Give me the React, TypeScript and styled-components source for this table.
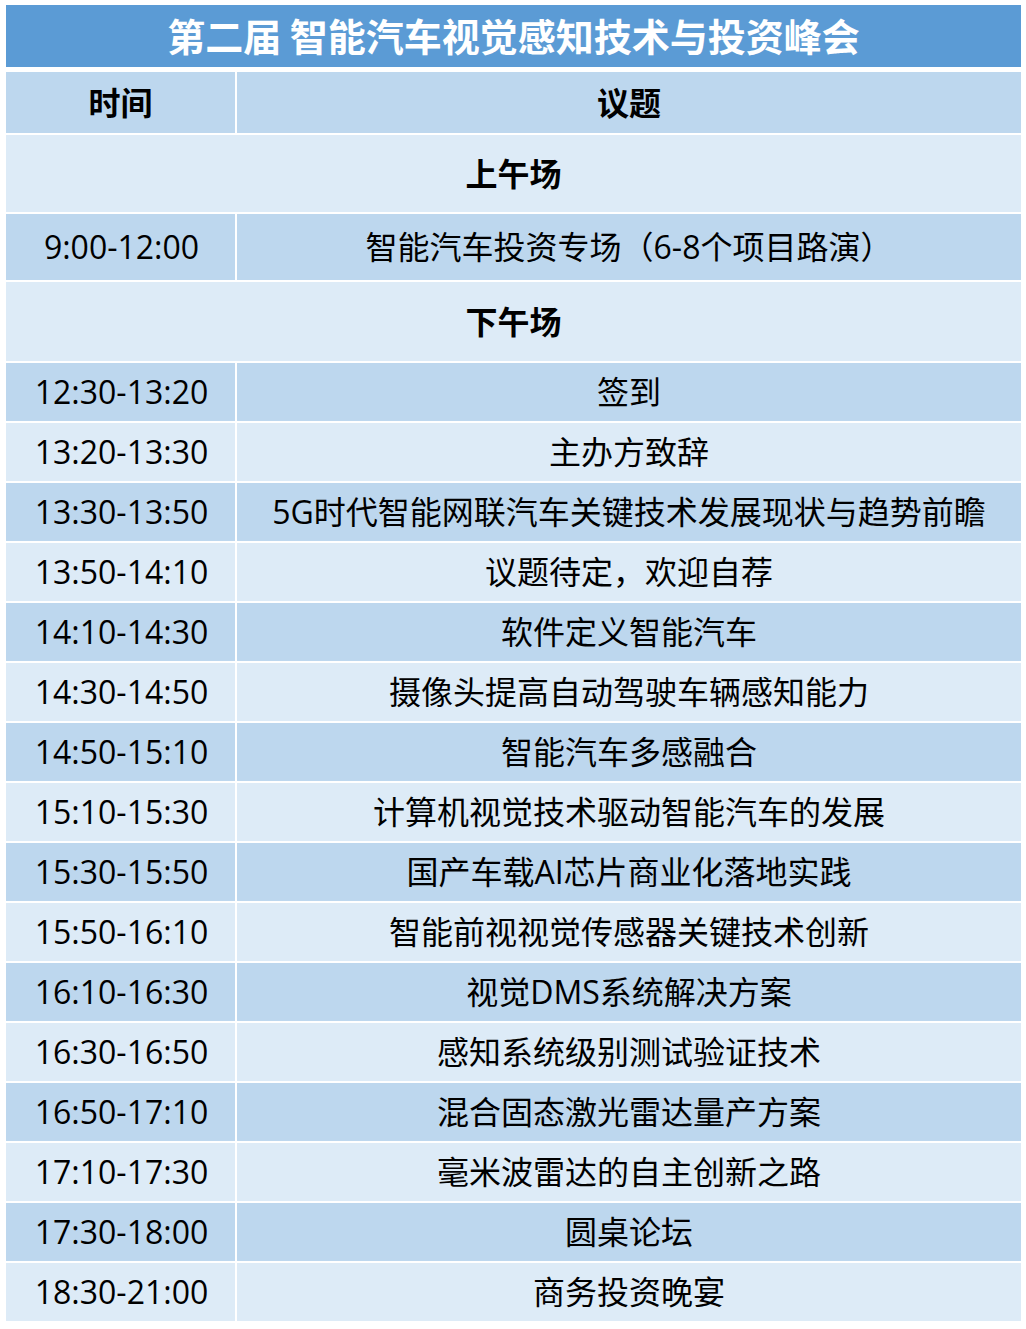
import React from "react";
import styled, { createGlobalStyle } from "styled-components";

const GlobalStyle = createGlobalStyle`
  html, body {
    margin: 0;
    padding: 0;
    background: #ffffff;
  }
  body {
    font-family: "Open Sans", "Noto Sans CJK SC", sans-serif;
    color: #000000;
  }
`;

const Page = styled.div`
  padding: 5px 5px 6px 6px;
  width: 1026px;
  box-sizing: border-box;
`;

const Sheet = styled.div`
  display: grid;
  grid-template-columns: 229px 784px;
  column-gap: 2px;
  row-gap: 2px;
  background: #ffffff;
`;

const Title = styled.div`
  grid-column: 1 / -1;
  height: 62px;
  margin-bottom: 3px;
  background: #5b9bd5;
  color: #ffffff;
  font-family: "Noto Sans CJK SC", sans-serif;
  font-weight: 700;
  font-size: 38px;
  display: flex;
  align-items: center;
  justify-content: center;
  line-height: 1;
  white-space: pre;
  padding-bottom: 2px;
  box-sizing: border-box;
`;

type Tone = "dark" | "light";

const toneColor = (t: Tone) => (t === "dark" ? "#bdd7ee" : "#ddebf7");

const Cell = styled.div<{ $tone: Tone; $h: number; $bold?: boolean; $span?: boolean }>`
  height: ${(p) => p.$h}px;
  box-sizing: border-box;
  background: ${(p) => toneColor(p.$tone)};
  display: flex;
  align-items: center;
  justify-content: center;
  font-size: 32px;
  line-height: 1;
  white-space: nowrap;
  font-weight: ${(p) => (p.$bold ? 700 : 400)};
  padding-bottom: ${(p) => (p.$bold ? 4 : 1)}px;
  font-family: ${(p) =>
    p.$bold ? `"Noto Sans CJK SC", sans-serif` : `"Open Sans", "Noto Sans CJK SC", sans-serif`};
  ${(p) => (p.$span ? "grid-column: 1 / -1;" : "")}
`;

const TimeText = styled.span`
  position: relative;
  left: 1px;
`;

const schedule: [string, string][] = [
  ["12:30-13:20", "签到"],
  ["13:20-13:30", "主办方致辞"],
  ["13:30-13:50", "5G时代智能网联汽车关键技术发展现状与趋势前瞻"],
  ["13:50-14:10", "议题待定，欢迎自荐"],
  ["14:10-14:30", "软件定义智能汽车"],
  ["14:30-14:50", "摄像头提高自动驾驶车辆感知能力"],
  ["14:50-15:10", "智能汽车多感融合"],
  ["15:10-15:30", "计算机视觉技术驱动智能汽车的发展"],
  ["15:30-15:50", "国产车载AI芯片商业化落地实践"],
  ["15:50-16:10", "智能前视视觉传感器关键技术创新"],
  ["16:10-16:30", "视觉DMS系统解决方案"],
  ["16:30-16:50", "感知系统级别测试验证技术"],
  ["16:50-17:10", "混合固态激光雷达量产方案"],
  ["17:10-17:30", "毫米波雷达的自主创新之路"],
  ["17:30-18:00", "圆桌论坛"],
  ["18:30-21:00", "商务投资晚宴"],
];

export default function App() {
  return (
    <>
      <GlobalStyle />
      <Page>
        <Sheet>
          <Title>第二届 智能汽车视觉感知技术与投资峰会</Title>
          <Cell $tone="dark" $h={61} $bold>时间</Cell>
          <Cell $tone="dark" $h={61} $bold>议题</Cell>
          <Cell $tone="light" $h={77} $bold $span>上午场</Cell>
          <Cell $tone="dark" $h={66}>
            <TimeText>9:00-12:00</TimeText>
          </Cell>
          <Cell $tone="dark" $h={66}>智能汽车投资专场（6-8个项目路演）</Cell>
          <Cell $tone="light" $h={79} $bold $span>下午场</Cell>
          {schedule.map(([time, topic], i) => {
            const tone: Tone = i % 2 === 0 ? "dark" : "light";
            return (
              <React.Fragment key={time}>
                <Cell $tone={tone} $h={58}>
                  <TimeText>{time}</TimeText>
                </Cell>
                <Cell $tone={tone} $h={58}>{topic}</Cell>
              </React.Fragment>
            );
          })}
        </Sheet>
      </Page>
    </>
  );
}
